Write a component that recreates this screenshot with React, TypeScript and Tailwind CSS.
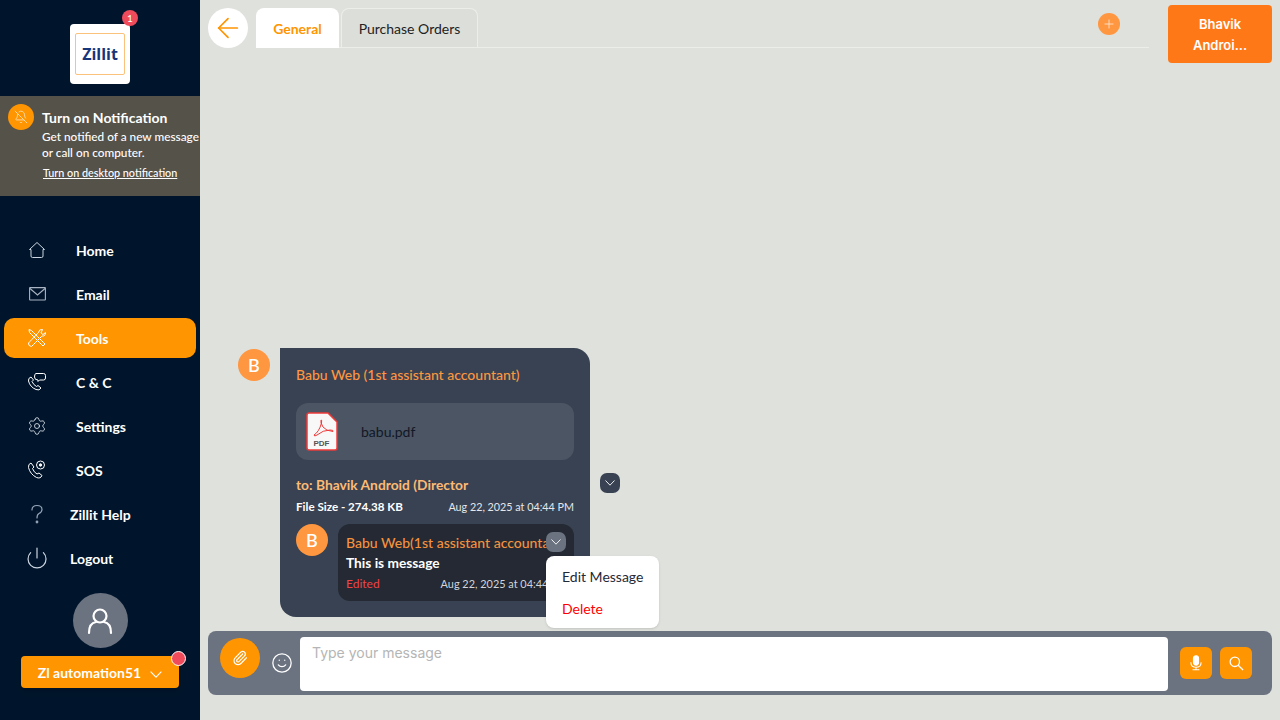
import { Plus, Settings, Paperclip, Smile, ArrowLeft, Power, BellOff } from 'lucide-react';
import type { ReactNode } from 'react';

const lato = { fontFamily: 'Lato, sans-serif' };

function HomeIcon() {
  return (
    <svg width="18" height="18" viewBox="0 0 18 18" fill="none" stroke="#cbd5e1" strokeWidth="1">
      <path d="M9 1.5 L16.5 8.5 L15 8.5 L15 15 Q15 16.5 13.5 16.5 L4.5 16.5 Q3 16.5 3 15 L3 8.5 L1.5 8.5 Z" strokeLinejoin="round" />
    </svg>
  );
}

function MailIcon() {
  return (
    <svg width="17" height="14" viewBox="0 0 17 14" fill="none" stroke="#aab4c2" strokeWidth="1.1">
      <rect x="0.6" y="0.6" width="15.8" height="12.4" rx="0.5" />
      <path d="M1 1.5 L8.5 8 L16 1.5" />
    </svg>
  );
}

function ToolsIcon() {
  return (
    <svg width="20" height="20" viewBox="0 0 20 20" fill="none" stroke="#fff" strokeWidth="1">
      <path d="M2 1.5 L4.5 2.5 L18 16 L16 18 L2.5 4.5 Z" />
      <path d="M18.5 4.5 L16 6.5 L14 5 L15.5 1.5 Q12 1 11.5 4.5 L1.5 15 Q1 18 4.5 18.5 L15 8 Q18.5 8.5 18.5 4.5 Z" />
    </svg>
  );
}

function PhoneChatIcon() {
  return (
    <svg width="20" height="20" viewBox="0 0 20 20" fill="none" stroke="#fff" strokeWidth="1">
      <path d="M4 5 Q1 6 1.5 9 Q3 15 9 17.5 Q12.5 19 14 16 L11 13.5 L9.5 14.5 Q6.5 13 5 9.5 L6.5 8 Z" />
      <path d="M9 1.5 L16.5 1.5 Q18.5 1.5 18.5 3.5 L18.5 6 Q18.5 8 16.5 8 L12.5 8 L11 9.5 L11 8 Q7.5 8 7.5 5 Q7.5 1.5 9 1.5 Z" />
    </svg>
  );
}

function PhoneSosIcon() {
  return (
    <svg width="20" height="20" viewBox="0 0 20 20" fill="none" stroke="#fff" strokeWidth="1">
      <path d="M4 3 Q1 4 1.5 7.5 Q3 14 9.5 17.5 Q13.5 19 15 15.5 L12 13 L10 14 Q7 12.5 5.5 8.5 L7 7 Z" />
      <circle cx="13.5" cy="5" r="4" />
      <circle cx="13.5" cy="5" r="1.2" fill="#fff" />
    </svg>
  );
}

function HelpIcon() {
  return (
    <svg width="14" height="20" viewBox="0 0 14 20" fill="none" stroke="#94a3b8" strokeWidth="1.2">
      <path d="M2 6 Q2 1.5 7 1.5 Q12 1.5 12 5.5 Q12 8 9 9.5 Q7 10.5 7 14" strokeLinecap="round" />
      <circle cx="7" cy="18" r="0.8" fill="#94a3b8" />
    </svg>
  );
}

function Chevron({ width = 10 }: { width?: number }) {
  return (
    <svg width={width} height={width * 0.6} viewBox="0 0 10 6" fill="none" stroke="#fff" strokeWidth="0.9">
      <path d="M0.5 0.5 L5 5.2 L9.5 0.5" />
    </svg>
  );
}

function MicIcon() {
  return (
    <svg width="12" height="16" viewBox="0 0 14 18" fill="none" stroke="#fff" strokeWidth="1.2">
      <rect x="4" y="0.5" width="6" height="11" rx="3" fill="#fff" />
      <path d="M1 8 Q1 14 7 14 Q13 14 13 8 M7 14 L7 17 M3 17 L11 17" />
    </svg>
  );
}

function SearchIcon() {
  return (
    <svg width="15" height="15" viewBox="0 0 16 16" fill="none" stroke="#fff" strokeWidth="1.4">
      <circle cx="6.2" cy="6.2" r="5" />
      <path d="M9.8 9.8 L15 15" />
    </svg>
  );
}

function NavItem({ icon, label, active, narrow }: { icon: ReactNode; label: string; active?: boolean; narrow?: boolean }) {
  return (
    <div className={`flex h-10 items-center rounded-[10px] ${active ? 'bg-[#ff9500]' : ''}`}>
      <div className="flex w-[66px] shrink-0 justify-center">{icon}</div>
      <span className={`text-[14px] font-bold text-white ${narrow ? '' : 'ml-[6px]'}`}>{label}</span>
    </div>
  );
}

function PdfIcon() {
  return (
    <svg width="32" height="39" viewBox="0 0 32 39" fill="none">
      <path d="M3 1 L22 1 L31 10 L31 36 Q31 38 29 38 L3 38 Q1 38 1 36 L1 3 Q1 1 3 1 Z" fill="#f8f8f8" stroke="#ee3a3a" strokeWidth="1.5" />
      <path d="M8 23 Q13 20 15.5 11 Q16 7 15 8 Q14 10 17 15 Q20 19 27 19.5 Q28 18 24 18 Q17 18 11 23 Q8 25 8 23 Z" stroke="#ee3a3a" strokeWidth="1" fill="none" />
      <text x="15.5" y="34" textAnchor="middle" fontSize="8" fontWeight="bold" fontFamily="Liberation Sans, sans-serif" fill="#555">PDF</text>
    </svg>
  );
}

export default function App() {
  return (
    <div className="flex h-screen w-full overflow-hidden bg-[#dfe1dc]" style={lato}>
      <aside className="flex w-[200px] shrink-0 flex-col bg-[#00152b]">
        <div className="flex justify-center pt-6">
          <div className="relative flex h-[60px] w-[60px] items-center justify-center rounded-[4px] bg-white">
            <div className="flex h-[42px] w-[50px] items-center justify-center rounded-[2px] border border-[#fbc27c]">
              <span className="text-[16px] font-bold text-[#17357a]" style={{ fontFamily: '"Open Sans", sans-serif' }}>Zillit</span>
            </div>
            <span className="absolute -right-[8px] -top-[14px] flex h-4 w-4 items-center justify-center rounded-full bg-[#f04b5b] text-[10px] text-white">1</span>
          </div>
        </div>

        <div className="mt-3 flex h-[100px] bg-[#55524a] pl-2 pt-2">
          <div className="flex h-[26px] w-[26px] shrink-0 items-center justify-center rounded-full bg-[#ff9500]">
            <BellOff size={14} color="#ffe0b0" strokeWidth={1.5} />
          </div>
          <div className="ml-2 pt-[5px] text-white">
            <div className="text-[14px] font-bold leading-[18px]">Turn on Notification</div>
            <div className="mt-[2px] whitespace-nowrap text-[11.8px] font-medium leading-4">Get notified of a new message</div>
            <div className="text-[11.8px] font-medium leading-4">or call on computer.</div>
            <div className="ml-px mt-[4px] text-[10.8px] font-medium leading-4 underline">Turn on desktop notification</div>
          </div>
        </div>

        <nav className="mt-[34px] flex flex-col gap-1 px-1">
          <NavItem icon={<HomeIcon />} label="Home" />
          <NavItem icon={<MailIcon />} label="Email" />
          <NavItem icon={<ToolsIcon />} label="Tools" active />
          <NavItem icon={<PhoneChatIcon />} label="C & C" />
          <NavItem icon={<Settings size={20} color="#e2e8f0" strokeWidth={1} />} label="Settings" />
          <NavItem icon={<PhoneSosIcon />} label="SOS" />
          <NavItem icon={<HelpIcon />} label="Zillit Help" narrow />
          <NavItem icon={<Power size={24} color="#cbd5e1" strokeWidth={1.2} />} label="Logout" narrow />
        </nav>

        <div className="mt-[15px] flex flex-col items-center">
          <div className="flex h-[55px] w-[55px] items-center justify-center rounded-full bg-[#6b7280]">
            <svg width="26" height="28" viewBox="0 0 26 28" fill="none" stroke="#fff" strokeWidth="2.2">
              <circle cx="13" cy="9" r="6.5" />
              <path d="M2 26 Q2 16 9 15 M24 26 Q24 16 17 15" strokeLinecap="round" />
            </svg>
          </div>
          <div className="relative mt-2 flex h-8 w-[158px] items-center justify-center gap-[9px] rounded-[4px] bg-[#ff9500] shadow-md">
            <span className="text-[14px] font-bold text-white">Zl automation51</span>
            <span className="mt-[5px]"><Chevron width={12} /></span>
            <span className="absolute -right-[7px] -top-[5px] h-[15px] w-[15px] rounded-full border border-white bg-[#f04b5b]" />
          </div>
        </div>
      </aside>

      <main className="flex min-w-0 flex-1 flex-col">
        <header className="flex h-[63px] shrink-0 items-start pl-2 pr-2">
          <div className="mt-2 flex h-10 w-10 shrink-0 items-center justify-center rounded-full bg-white">
            <ArrowLeft size={32} color="#ff9500" strokeWidth={1.3} />
          </div>
          <div className="mt-2 ml-2 flex h-10 flex-1 items-start border-b border-[#eceee9]">
            <div className="flex h-10 w-[83px] items-center justify-center rounded-t-[8px] bg-white text-[14px] font-bold text-[#ff9500]">General</div>
            <div className="ml-[2px] flex h-[39px] w-[137px] items-center justify-center rounded-t-[8px] border border-b-0 border-[#eceee9] bg-[#dcdeda] pt-[1px] text-[14px] text-[#222]">Purchase Orders</div>
            <div className="ml-auto mr-[29px] mt-[5px] flex h-[22px] w-[22px] items-center justify-center rounded-full bg-[#ff9640]">
              <Plus size={14} color="#ffe3cc" strokeWidth={1.5} />
            </div>
          </div>
          <div className="ml-[19px] mt-[5px] flex h-[58px] w-[104px] shrink-0 items-center justify-center rounded-[4px] bg-[#ff7817] px-4 pt-[2px] text-center text-[13px] leading-[21px] text-white" style={{ fontFamily: 'Inter, sans-serif', fontWeight: 600 }}>
            Bhavik Androi...
          </div>
        </header>

        <section className="flex min-h-0 flex-1 flex-col justify-end pl-[38px]">
          <div className="mb-[14px] flex items-start">
            <div className="mt-px flex h-8 w-8 items-center justify-center rounded-full bg-[#ff9640] text-[18px] font-semibold text-white">B</div>
            <div className="relative ml-[10px] h-[269px] w-[310px] rounded-[16px] rounded-tl-none bg-[#384252] px-4 pt-4">
              <div className="text-[14px] font-medium leading-[22px] text-[#ff9640]">Babu Web (1st assistant accountant)</div>
              <div className="mt-[17px] flex h-[57px] items-center rounded-[12px] bg-[#4b5563] pl-[10px]">
                <PdfIcon />
                <span className="ml-[23px] text-[14px] text-[#111827]">babu.pdf</span>
              </div>
              <div className="mt-[15px] text-[13.8px] font-bold leading-5 text-[#fdba74]">to: Bhavik Android (Director</div>
              <div className="mt-[2px] flex items-center justify-between">
                <span className="text-[11.6px] font-bold leading-5 text-white">File Size - 274.38 KB</span>
                <span className="text-[10.75px] leading-5 text-[#e5e7eb]">Aug 22, 2025 at 04:44 PM</span>
              </div>
              <div className="mt-[7px] flex items-start">
                <div className="flex h-8 w-8 shrink-0 items-center justify-center rounded-full bg-[#ff9640] text-[18px] font-semibold text-white">B</div>
                <div className="relative ml-[10px] h-[77px] min-w-0 flex-1 overflow-hidden rounded-[12px] bg-[#242933] pl-2 pt-2">
                  <div className="whitespace-nowrap text-[14px] font-medium leading-[22px] text-[#f5923e]">Babu Web(1st assistant accountant</div>
                  <div className="text-[13.7px] font-bold leading-[18px] text-white">This is message</div>
                  <div className="mt-[2px] flex items-center whitespace-nowrap">
                    <span className="text-[12px] leading-5 text-[#ef4444]">Edited</span>
                    <span className="ml-[61px] text-[10.9px] leading-5 text-[#d1d5db]">Aug 22, 2025 at 04:44 PM</span>
                  </div>
                </div>
              </div>

              <div className="absolute left-[320px] top-[125px] flex h-5 w-5 items-center justify-center rounded-[7px] bg-[#384252]">
                <Chevron />
              </div>
              <div className="absolute left-[266px] top-[184px] flex h-5 w-5 items-center justify-center rounded-[7px] bg-[#6b7280]">
                <Chevron />
              </div>
              <div className="absolute left-[266px] top-[208px] flex h-[72px] w-[113px] flex-col justify-center gap-3 rounded-[8px] bg-white pl-4 pt-[2px] text-[14px] shadow-sm">
                <span className="leading-5 text-[#1f2937]">Edit Message</span>
                <span className="leading-5 text-[#f00]">Delete</span>
              </div>
            </div>
          </div>
        </section>

        <div className="mx-2 mb-[25px] flex h-16 shrink-0 items-center rounded-[8px] bg-[#6b7280] pl-3 pr-5">
          <div className="-mt-[10px] flex h-10 w-10 items-center justify-center rounded-full bg-[#ff9500]">
            <Paperclip size={16} color="#fff" strokeWidth={1.8} />
          </div>
          <Smile size={22} color="#fff" strokeWidth={1.4} className="ml-[11px]" />
          <div className="ml-[7px] mt-[2px] h-[54px] flex-1 rounded-[4px] bg-white px-3 pt-[6px] text-[14px] leading-5 text-[#b5b5b5]" style={{ fontFamily: 'Inter, sans-serif' }}>
            Type your message
          </div>
          <div className="ml-3 flex h-8 w-8 items-center justify-center rounded-[6px] bg-[#ff9500]">
            <MicIcon />
          </div>
          <div className="ml-2 flex h-8 w-8 items-center justify-center rounded-[6px] bg-[#ff9500]">
            <SearchIcon />
          </div>
        </div>
      </main>
    </div>
  );
}
